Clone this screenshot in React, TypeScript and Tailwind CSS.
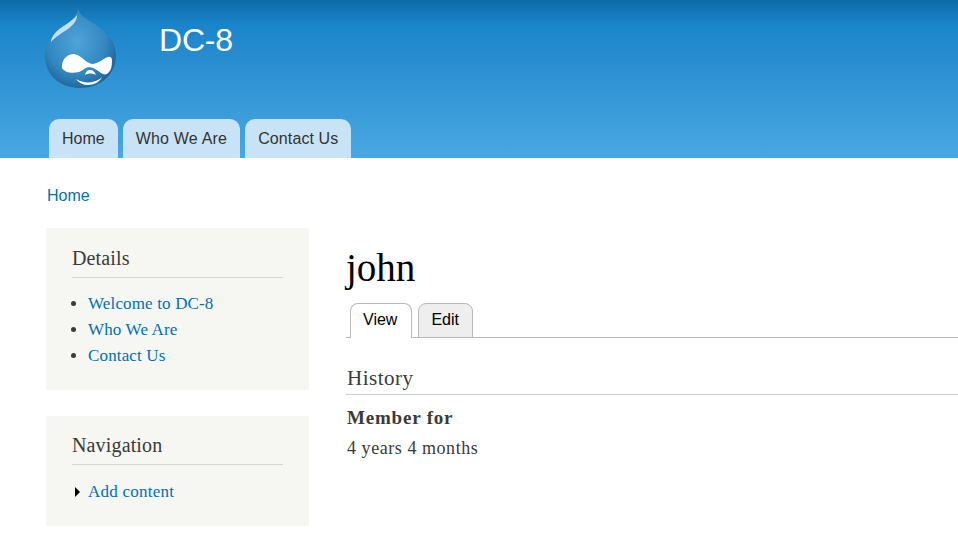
import React from 'react';

const serif = "font-['Liberation_Serif',serif]";

const DropLogo = () => (
  <svg width="74" height="82" viewBox="0 0 74 82" className="block">
    <defs>
      <radialGradient id="drop" cx="45%" cy="42%" r="62%">
        <stop offset="0%" stopColor="#4ea3d8" />
        <stop offset="65%" stopColor="#3488c2" />
        <stop offset="100%" stopColor="#1d6396" />
      </radialGradient>
    </defs>
    <path
      d="M34 0 C35 7 42 11 49 15 C63 23 72 35 72 47 C72 67 56 80 36 80 C15 80 1 66 1 48 C1 34 11 24 20 18 C27 13 33 9 34 0 Z"
      fill="url(#drop)"
    />
    <path d="M33 7 C28 14 18 18 12 24 C9 27 7 31 7 34 C11 29 18 25 24 21 C29 17 33 13 33 7 Z" fill="#dcedf7" opacity="0.85" />
    <path
      d="M18 57 C19 50 24 46 30 46 C37 47 42 55 48 56 C54 56 60 50 64 49 C67 48 68 50 68 53 C68 58 67 62 65 64 C63 67 60 67 57 65 C53 62 49 59 44 59 C41 60 38 63 35 64 C30 65 26 65 23 64 C19 62 17 60 18 57 Z"
      fill="#ffffff"
    />
    <path d="M41 67 C42 63 44 62 46 62 C49 62 51 64 52 67 C49 65 44 65 41 67 Z" fill="#ffffff" />
    <path d="M32 71 C37 74 43 75 48 74 C52 73 55 72 58 69 C56 74 50 77 44 77 C39 77 35 75 32 71 Z" fill="#ffffff" />
  </svg>
);

const NavTab = ({ label, className }: { label: string; className?: string }) => (
  <a className={`h-[39px] px-[13px] pt-[10px] rounded-t-[10px] bg-[#c8e3f6] text-[16px] leading-[20px] text-[#333333] ${className ?? ''}`}>
    {label}
  </a>
);

const SidebarBlock = ({ title, children, className }: { title: string; children: React.ReactNode; className: string }) => (
  <div className={`bg-[#f6f6f2] px-[26px] ${className}`}>
    <h2 className={`${serif} text-[20px] tracking-[0.15px] leading-[24px] text-[#3b3b3b] border-b border-[#d6d6d6] pb-[7px]`}>{title}</h2>
    {children}
  </div>
);

const App = () => {
  return (
    <div className="w-[958px] h-[554px] overflow-hidden bg-white font-['Liberation_Sans',sans-serif]">
      <header className="h-[158px] bg-gradient-to-b from-[#0f6aa8] via-[#1a84c9] via-15% to-[#48a8e4] flex flex-col">
        <div className="h-[119px] flex items-start pl-[44px] pt-[8px]">
          <DropLogo />
          <span className="ml-[41px] mt-[13px] text-[32px] tracking-[-0.2px] leading-[38px] text-white">DC-8</span>
        </div>
        <nav className="flex gap-[5px] pl-[49px]">
          <NavTab label="Home" />
          <NavTab label="Who We Are" className="tracking-[0.2px]" />
          <NavTab label="Contact Us" className="tracking-[0.1px]" />
        </nav>
      </header>

      <div className="pl-[47px] pt-[28px] text-[16px] leading-[20px] text-[#0071b3]">Home</div>

      <div className="flex pl-[46px] pt-[22px]">
        <aside className="w-[263px] shrink-0 flex flex-col gap-[26px]">
          <SidebarBlock title="Details" className="h-[162px] pt-[18px]">
            <ul className={`${serif} mt-[13px] ml-[16px] list-disc text-[17px] tracking-[0.15px] leading-[26px] marker:text-[#3b3b3b]`}>
              <li className="text-[#0071b3]">Welcome to DC-8</li>
              <li className="text-[#0071b3]">Who We Are</li>
              <li className="text-[#0071b3]">Contact Us</li>
            </ul>
          </SidebarBlock>
          <SidebarBlock title="Navigation" className="h-[110px] pt-[17px]">
            <div className={`${serif} mt-[14px] flex items-center text-[17px] tracking-[0.25px] leading-[26px] text-[#0071b3]`}>
              <span className="ml-[3px] mr-[8px] w-0 h-0 border-y-[5px] border-y-transparent border-l-[5px] border-l-black" />
              Add content
            </div>
          </SidebarBlock>
        </aside>

        <main className="flex-1 ml-[37px]">
          <h1 className={`${serif} mt-[17px] text-[39px] leading-[46px] text-black`}>john</h1>
          <div className="mt-[12px] h-[35px] border-b border-[#bbbbbb] flex gap-[6px] pl-[4px] items-end">
            <a className="h-[35px] -mb-px pl-[12px] pr-[14px] pt-[6px] rounded-t-[8px] border border-b-0 border-[#bbbbbb] bg-white text-[16px] leading-[20px] text-black">View</a>
            <a className="h-[35px] -mb-px pl-[12px] pr-[13px] pt-[6px] rounded-t-[8px] border border-[#bbbbbb] bg-[#eeeeee] text-[16px] leading-[20px] text-black">Edit</a>
          </div>
          <h2 className={`${serif} mt-[27px] pl-px text-[21px] tracking-[0.5px] leading-[26px] text-[#3b3b3b] border-b border-[#cccccc] pb-[3px]`}>History</h2>
          <div className={`${serif} mt-[10px] pl-px text-[19px] tracking-[0.8px] leading-[26px] font-bold text-[#3b3b3b]`}>Member for</div>
          <div className={`${serif} mt-[4px] pl-px text-[18px] tracking-[0.55px] leading-[26px] text-[#3b3b3b]`}>4 years 4 months</div>
        </main>
      </div>
    </div>
  );
};

export default App;
